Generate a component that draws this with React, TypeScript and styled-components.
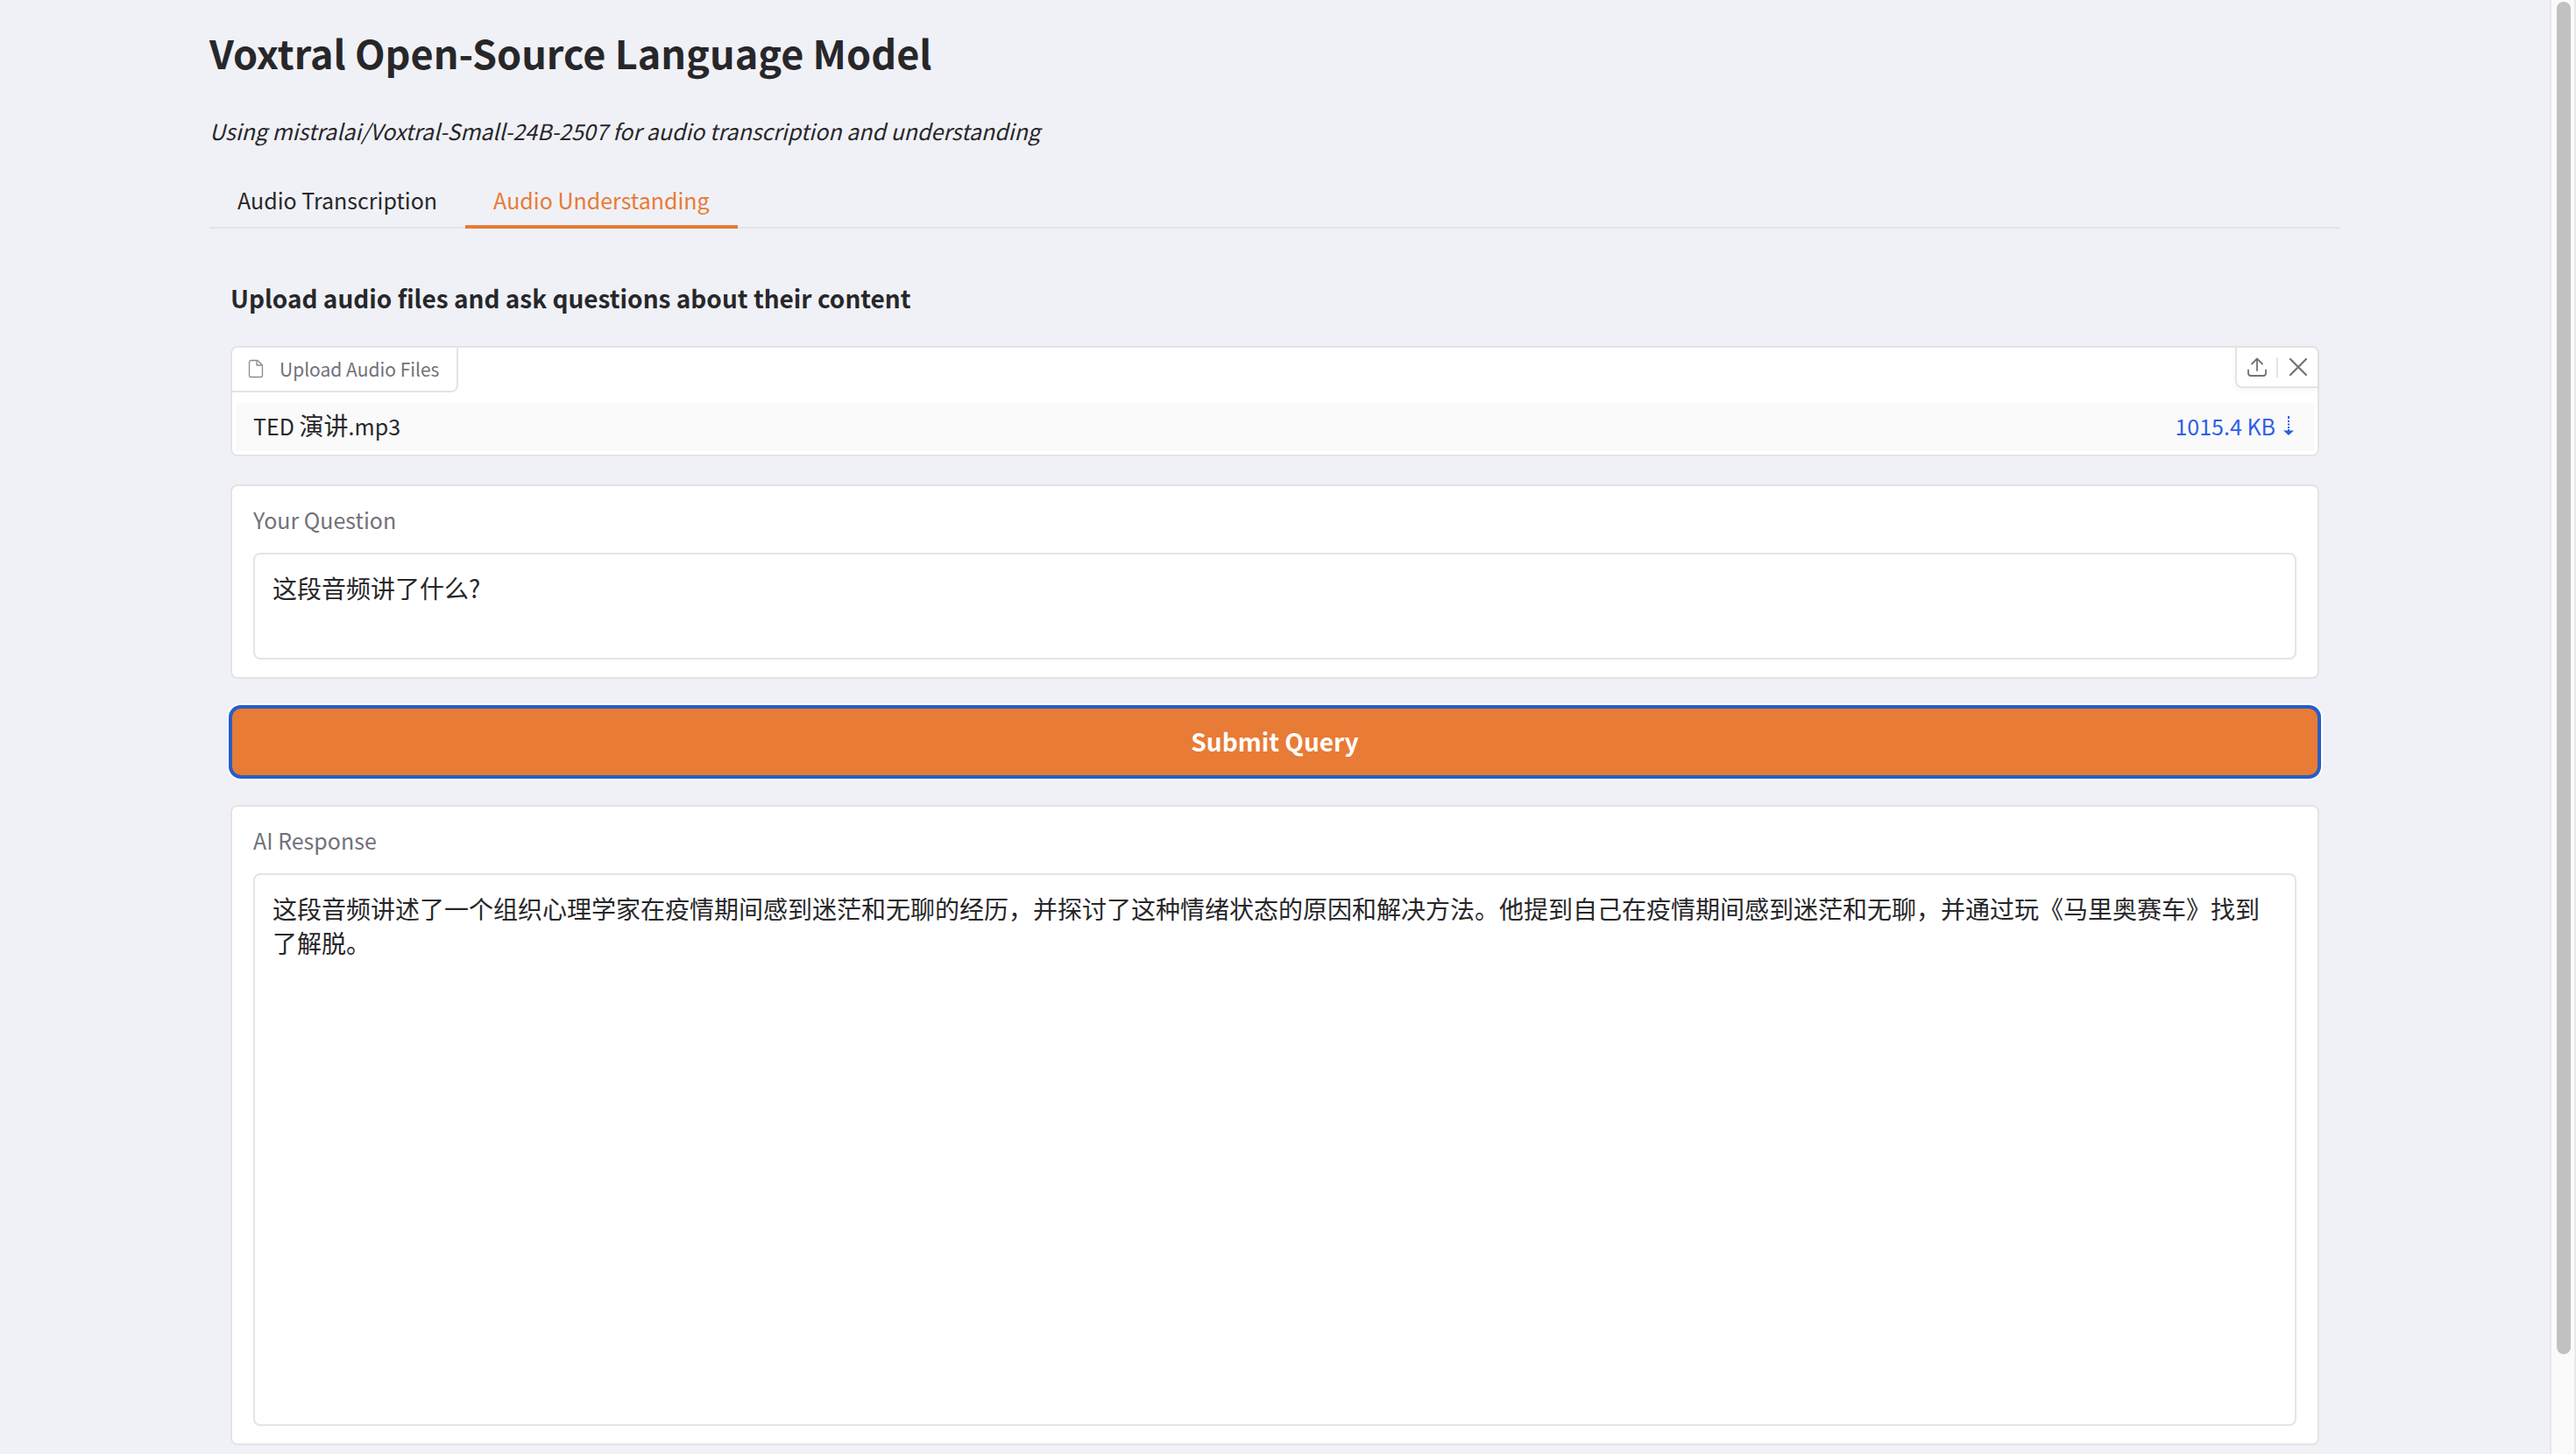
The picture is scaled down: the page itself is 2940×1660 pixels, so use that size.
import React, { useState } from "react";
import styled, { createGlobalStyle, css } from "styled-components";

const color = {
  page: "#f0f1f6",
  card: "#ffffff",
  border: "#e4e4e7",
  text: "#27272a",
  muted: "#71717a",
  accent: "#e87b35",
  focus: "#265ec8",
  link: "#2f5ee6",
};

const GlobalStyle = createGlobalStyle`
  *, *::before, *::after { box-sizing: border-box; }
  body {
    margin: 0;
    background: ${color.page};
    color: ${color.text};
    font-family: "Noto Sans CJK SC", "Noto Sans", sans-serif;
    font-size: 25px;
    line-height: 36px;
  }
  button, textarea { font: inherit; color: inherit; margin: 0; }
`;

const Page = styled.div`
  display: flex;
  min-height: 100vh;
`;

const Main = styled.main`
  flex: 1;
  min-width: 0;
  max-width: 2560px;
  margin: 0 auto;
  padding: 32px 64px 0;
`;

const ScrollTrack = styled.div`
  position: sticky;
  top: 0;
  flex: none;
  width: 30px;
  height: 100vh;
  padding: 2px 4px 2px 6px;
  background: #fafafa;
  border: solid #e8e8e8;
  border-width: 0 2px;
`;

const ScrollThumb = styled.div`
  height: calc(100% - 112px);
  background: #c1c1c1;
  border-radius: 8px;
`;

const Title = styled.h1`
  margin: 0 0 41px;
  font-size: 45px;
  line-height: 56px;
  font-weight: 600;
`;

const Subtitle = styled.p`
  margin: 0 0 26px;
  line-height: 40px;
  font-style: italic;
`;

const TabList = styled.div`
  display: flex;
  box-shadow: inset 0 -2px ${color.border};
`;

const Tab = styled.button<{ $active: boolean }>`
  height: 66px;
  padding: 0 32px;
  border: 0;
  background: none;
  cursor: pointer;
  ${({ $active }) =>
    $active &&
    css`
      color: ${color.accent};
      box-shadow: inset 0 -4px ${color.accent};
    `}
`;

const Panel = styled.section`
  padding: 59px 24px 0;
`;

const PanelHeading = styled.h3`
  margin: 0 0 35px;
  font-size: 28px;
  line-height: 40px;
  font-weight: 600;
`;

const Stack = styled.div`
  display: flex;
  flex-direction: column;
  gap: 32px;
`;

const Card = styled.div`
  background: ${color.card};
  border: 2px solid ${color.border};
  border-radius: 8px;
`;

const FieldCard = styled(Card)`
  display: flex;
  flex-direction: column;
  gap: 20px;
  padding: 20px 24px;
`;

const FieldLabel = styled.label`
  color: ${color.muted};
`;

const TextArea = styled.textarea`
  display: block;
  width: 100%;
  padding: 19px 20px 21px;
  border: 2px solid ${color.border};
  border-radius: 8px;
  background: ${color.card};
  font-size: 28px;
  line-height: 39px;
  resize: none;
  outline: none;
`;

const ResponseArea = styled(TextArea)`
  min-height: 631px;
`;

const UploadHeader = styled.div`
  display: flex;
  justify-content: space-between;
  align-items: flex-start;
  margin-bottom: 12px;
`;

const UploadLabel = styled.div`
  display: flex;
  align-items: center;
  gap: 18px;
  height: 51px;
  padding: 0 20px 2px 18px;
  border: solid ${color.border};
  border-width: 0 2px 2px 0;
  border-radius: 0 0 8px 0;
  color: ${color.muted};
  font-size: 21px;
`;

const Toolbar = styled.div`
  display: flex;
  align-items: center;
  height: 46px;
  border: solid ${color.border};
  border-width: 0 0 2px 2px;
  border-radius: 0 0 0 8px;
  box-shadow: 0 2px 8px rgba(0, 0, 0, 0.05);
`;

const IconButton = styled.button`
  display: grid;
  place-items: center;
  width: 45px;
  height: 44px;
  padding: 0;
  border: 0;
  background: none;
  color: ${color.muted};
  cursor: pointer;
`;

const Divider = styled.span`
  width: 2px;
  height: 23px;
  background: ${color.border};
`;

const FileRow = styled.div`
  display: flex;
  justify-content: space-between;
  align-items: center;
  height: 55px;
  margin: 0 4px 4px;
  padding: 0 23px 4px 20px;
  background: #fafafa;
`;

const Han = styled.span`
  font-size: 28px;
`;

const DownloadLink = styled.a`
  display: flex;
  align-items: center;
  gap: 9px;
  color: ${color.link};
  text-decoration: none;
`;

const SubmitButton = styled.button`
  height: 80px;
  padding: 0 24px 2px;
  border: 2px solid ${color.focus};
  border-radius: 12px;
  background: ${color.accent};
  color: #ffffff;
  font-size: 28px;
  line-height: 40px;
  font-weight: 600;
  outline: none;
  box-shadow: 0 0 0 2px ${color.focus}, 0 0 0 4px #ffffff;
  cursor: pointer;
`;

const FileIcon = () => (
  <svg width="18" height="22" viewBox="0 0 18 22" fill="none" stroke="#8b8b93" strokeWidth="1.3" strokeLinejoin="round" aria-hidden="true">
    <path d="M11 1.500H3.500a2 2 0 0 0-2 2v15a2 2 0 0 0 2 2h11a2 2 0 0 0 2-2V7z" />
    <path d="M10 1.500V7h6.500" />
  </svg>
);

const UploadIcon = () => (
  <svg width="22" height="22" viewBox="0 0 22 22" fill="none" stroke="currentColor" strokeWidth="1.8" strokeLinecap="round" strokeLinejoin="round" aria-hidden="true">
    <path d="M11 15V1.500M5 7.500l6-6 6 6" />
    <path d="M1 14.500V18a3 3 0 0 0 3 3h14a3 3 0 0 0 3-3v-3.500" />
  </svg>
);

const CloseIcon = () => (
  <svg width="22" height="22" viewBox="0 0 22 22" fill="none" stroke="currentColor" strokeWidth="2.2" strokeLinecap="round" aria-hidden="true">
    <path d="M2 2l18 18M20 2L2 20" />
  </svg>
);

const DownArrow = () => (
  <svg width="12" height="24" viewBox="0 0 12 24" fill="currentColor" aria-hidden="true">
    <path d="M5 1h2v3H5zM5 6h2v2H5zM5 9.500h2v2H5zM5 13h2v2H5zM5 16h2v2H5zM0 17.500h12l-6 5.500z" />
  </svg>
);

const tabs = ["Audio Transcription", "Audio Understanding"];

const answer =
  "这段音频讲述了一个组织心理学家在疫情期间感到迷茫和无聊的经历，并探讨了这种情绪状态的原因和解决方法。他提到自己在疫情期间感到迷茫和无聊，并通过玩《马里奥赛车》找到了解脱。";

export default function App() {
  const [active, setActive] = useState(tabs[1]);
  const [question, setQuestion] = useState("这段音频讲了什么?");

  return (
    <>
      <GlobalStyle />
      <Page>
        <Main>
          <Title>Voxtral Open-Source Language Model</Title>
          <Subtitle>Using mistralai/Voxtral-Small-24B-2507 for audio transcription and understanding</Subtitle>
          <TabList role="tablist">
            {tabs.map((tab) => (
              <Tab key={tab} type="button" role="tab" aria-selected={tab === active} $active={tab === active} onClick={() => setActive(tab)}>
                {tab}
              </Tab>
            ))}
          </TabList>
          <Panel role="tabpanel">
            <PanelHeading>Upload audio files and ask questions about their content</PanelHeading>
            <Stack>
              <Card>
                <UploadHeader>
                  <UploadLabel>
                    <FileIcon />
                    Upload Audio Files
                  </UploadLabel>
                  <Toolbar>
                    <IconButton type="button" aria-label="Upload">
                      <UploadIcon />
                    </IconButton>
                    <Divider />
                    <IconButton type="button" aria-label="Clear">
                      <CloseIcon />
                    </IconButton>
                  </Toolbar>
                </UploadHeader>
                <FileRow>
                  <span>
                    TED <Han>演讲</Han>.mp3
                  </span>
                  <DownloadLink href="#">
                    1015.4 KB
                    <DownArrow />
                  </DownloadLink>
                </FileRow>
              </Card>
              <FieldCard>
                <FieldLabel htmlFor="question">Your Question</FieldLabel>
                <TextArea id="question" rows={2} value={question} onChange={(e) => setQuestion(e.target.value)} />
              </FieldCard>
              <SubmitButton type="button">Submit Query</SubmitButton>
              <FieldCard>
                <FieldLabel htmlFor="response">AI Response</FieldLabel>
                <ResponseArea id="response" rows={15} readOnly value={answer} />
              </FieldCard>
            </Stack>
          </Panel>
        </Main>
        <ScrollTrack>
          <ScrollThumb />
        </ScrollTrack>
      </Page>
    </>
  );
}
